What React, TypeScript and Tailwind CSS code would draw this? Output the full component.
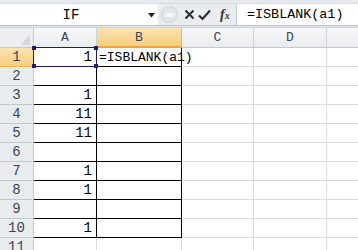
import React from "react";

const cols = [
  { key: "A", w: "w-[63px]" },
  { key: "B", w: "w-[85px]" },
  { key: "C", w: "w-[72px]" },
  { key: "D", w: "w-[73px]" },
];

const values: Record<number, string> = { 1: "1", 3: "1", 4: "11", 5: "11", 7: "1", 8: "1", 10: "1" };

export default function App() {
  const rows = Array.from({ length: 11 }, (_, i) => i + 1);
  return (
    <div className="w-[358px] h-[250px] overflow-hidden bg-white text-[13px] leading-none text-black" style={{ fontFamily: '"Liberation Mono", "DejaVu Sans Mono", monospace' }}>
      <div className="h-[4px] bg-[#e6eaef] border-b border-[#d5dae1]" />
      {/* formula bar */}
      <div className="h-[22px] flex bg-[#e9edf2] border-b border-[#b9c1cc]">
        <div className="w-[158px] shrink-0 bg-white flex items-center relative">
          <span className="w-[142px] text-center text-[14px]">IF</span>
          <svg width="8" height="5" viewBox="0 0 8 5" className="ml-[6px] mt-[2px]">
            <path d="M0 0 H7 L3.5 4.5 Z" fill="#222" />
          </svg>
        </div>
        <div className="w-[78px] shrink-0 flex items-center">
          <div className="w-[17px] h-[17px] shrink-0 rounded-full bg-[#e2e5e9] border border-[#c9ced5] ml-[3px] flex items-center justify-center">
            <div className="w-[9px] h-[4px] rounded-full bg-[#f5f6f7]" />
          </div>
          <svg width="11" height="11" viewBox="0 0 11 11" className="ml-[6px] shrink-0">
            <path d="M1.5 1.5 L9.5 9.5 M9.5 1.5 L1.5 9.5" stroke="#2e2e2e" strokeWidth="2" />
          </svg>
          <svg width="13" height="12" viewBox="0 0 13 12" className="ml-[3px] shrink-0">
            <path d="M1 6.5 L4.5 10 L12 1.5" stroke="#2e2e2e" strokeWidth="2.2" fill="none" />
          </svg>
          <span className="ml-[9px] text-[14px] italic font-bold text-[#333]" style={{ fontFamily: '"Liberation Serif", serif' }}>
            f<span className="text-[10px]">x</span>
          </span>
        </div>
        <div className="flex-1 bg-white border-l border-[#c5ccd6] flex items-center pl-[10px] text-[13.4px]">=ISBLANK(a1)</div>
      </div>
      <div className="h-[2px] bg-[#e3e7ed] border-b border-[#cfd5dc]" />
      {/* column headers */}
      <div className="h-[20px] flex">
        <div className="w-[34px] bg-[#eceef1] border-r border-b border-[#c4c9d0] relative">
          <svg width="10" height="10" viewBox="0 0 10 10" className="absolute right-[3px] bottom-[2px]">
            <path d="M10 0 V10 H0 Z" fill="#d5d9de" />
          </svg>
        </div>
        {cols.map((c) => (
          <div
            key={c.key}
            className={`${c.w} flex items-center justify-center border-r ${
              c.key === "B"
                ? "bg-gradient-to-b from-[#fbe3b0] to-[#f6cd7a] border-[#f0b455] border-b-2 border-b-[#f2a33a]"
                : "bg-gradient-to-b from-[#f6f7f9] to-[#e9ecef] border-[#cdd2d8] border-b border-b-[#c4c9d0]"
            } text-[#3c4552]`}
          >
            {c.key}
          </div>
        ))}
        <div className="flex-1 bg-gradient-to-b from-[#f6f7f9] to-[#e9ecef] border-b border-[#c4c9d0]" />
      </div>
      {/* rows */}
      {rows.map((r) => {
        const inBox = r <= 10;
        return (
          <div key={r} className="h-[19px] flex">
            <div
              className={`w-[34px] flex items-center justify-center border-r border-b ${
                r === 1
                  ? "bg-gradient-to-b from-[#fbe3b0] to-[#f6cd7a] border-r-[#f2a33a] border-b-[#f0b455]"
                  : "bg-[#e9ecef] border-[#c4c9d0]"
              } text-[#3c4552] text-[14px]`}
            >
              {r}
            </div>
            {/* A */}
            <div
              className={`w-[63px] relative flex items-center justify-end pr-[4px] border-b border-r text-[14px] ${
                inBox ? "border-black" : "border-[#d9dcdf]"
              }`}
            >
              {values[r] ?? ""}
              {r === 1 && (
                <>
                  <div className="absolute left-[-1px] top-[-1px] right-[-1px] bottom-[-1px] border border-[#1c1c78]" />
                  <div className="absolute left-[-2px] top-[-2px] w-[4px] h-[4px] bg-[#1c1c78]" />
                  <div className="absolute right-[-2px] top-[-2px] w-[4px] h-[4px] bg-[#1c1c78]" />
                  <div className="absolute left-[-2px] bottom-[-2px] w-[4px] h-[4px] bg-[#1c1c78]" />
                  <div className="absolute right-[-2px] bottom-[-2px] w-[4px] h-[4px] bg-[#1c1c78]" />
                </>
              )}
            </div>
            {/* B */}
            <div
              className={`w-[85px] flex items-center pl-[2px] border-b border-r whitespace-nowrap ${
                inBox ? "border-black" : "border-[#d9dcdf]"
              }`}
            >
              {r === 1 ? "=ISBLANK(a1)" : ""}
            </div>
            <div className="w-[72px] border-b border-r border-[#d9dcdf]" />
            <div className="w-[73px] border-b border-r border-[#d9dcdf]" />
            <div className="flex-1 border-b border-[#d9dcdf]" />
          </div>
        );
      })}
    </div>
  );
}
